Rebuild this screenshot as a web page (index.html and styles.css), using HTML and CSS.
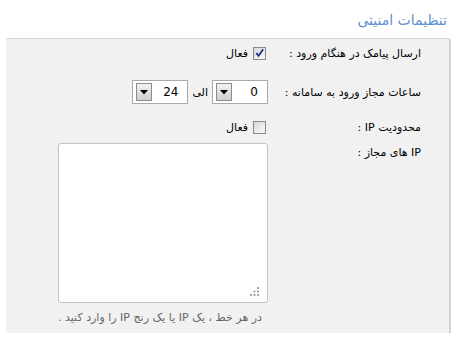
FILE: index.html
```html
<!DOCTYPE html>
<html lang="fa" dir="rtl">
<head>
    <meta charset="UTF-8">
    <title>تنظیمات امنیتی</title>
    <link rel="stylesheet" href="styles.css">
</head>
<body>
    <h1 class="title">تنظیمات امنیتی</h1>

    <div class="panel">
        <div class="row row-sms">
            <div class="label">ارسال پیامک در هنگام ورود :</div>
            <div class="field">
                <span class="check">
                    <svg width="12" height="12" viewBox="0 0 12 12"><path d="M2.5 6 L5 9 L10 2" fill="none" stroke="#1f2f8a" stroke-width="2"/></svg>
                </span>
                <span class="check-text">فعال</span>
            </div>
        </div>

        <div class="row row-hours">
            <div class="label">ساعات مجاز ورود به سامانه :</div>
            <div class="field">
                <div class="combo">
                    <span class="combo-value">0</span>
                    <span class="combo-btn"><svg width="8" height="5" viewBox="0 0 8 5"><path d="M0 0 H8 L4 4.5 Z" fill="#000"/></svg></span>
                </div>
                <span class="between">الی</span>
                <div class="combo">
                    <span class="combo-value">24</span>
                    <span class="combo-btn"><svg width="8" height="5" viewBox="0 0 8 5"><path d="M0 0 H8 L4 4.5 Z" fill="#000"/></svg></span>
                </div>
            </div>
        </div>

        <div class="row row-limit">
            <div class="label">محدودیت IP :</div>
            <div class="field">
                <span class="check"></span>
                <span class="check-text">فعال</span>
            </div>
        </div>

        <div class="row row-ips">
            <div class="label">IP های مجاز :</div>
            <div class="field field-col">
                <div class="area-wrap">
                    <textarea class="area"></textarea>
                    <svg class="grip" width="10" height="10" viewBox="0 0 10 10">
                        <rect x="7" y="0" width="2" height="2" fill="#a8a8a8"/>
                        <rect x="3.5" y="3.5" width="2" height="2" fill="#a8a8a8"/>
                        <rect x="7" y="3.5" width="2" height="2" fill="#a8a8a8"/>
                        <rect x="0" y="7" width="2" height="2" fill="#a8a8a8"/>
                        <rect x="3.5" y="7" width="2" height="2" fill="#a8a8a8"/>
                        <rect x="7" y="7" width="2" height="2" fill="#a8a8a8"/>
                    </svg>
                </div>
                <div class="hint">در هر خط ، یک IP یا یک رنج IP را وارد کنید .</div>
            </div>
        </div>
    </div>
</body>
</html>
```

FILE: styles.css
```css
body {
    margin: 0;
    padding: 0 8px 0 6px;
    font-family: "DejaVu Sans", Tahoma, sans-serif;
    font-size: 11px;
    color: #000;
    background: #fff;
}
.title {
    margin: 0;
    padding: 12px 4px 0 0;
    height: 26px;
    font-size: 14px;
    font-weight: normal;
    color: #5f8fd2;
}
.panel {
    background: #f1f1f1;
    border-top: 1px solid #d6d6d6;
    border-right: 2px solid #d3d3d3;
    border-top-right-radius: 3px;
    padding: 6px 0 10px;
    height: 278px;
}
.row {
    display: flex;
    align-items: center;
}
.label {
    width: 153px;
    padding-right: 28px;
    flex-shrink: 0;
    white-space: nowrap;
}
.field {
    display: flex;
    align-items: center;
}
.row-sms {
    height: 16px;
}
.row-hours {
    height: 24px;
    margin-top: 19px;
}
.row-limit {
    height: 16px;
    margin-top: 15px;
}
.row-ips {
    align-items: flex-start;
    margin-top: 8px;
}
.row-ips .label {
    padding-top: 3px;
}
.check {
    width: 11px;
    height: 11px;
    margin-right: 2px;
    border: 1px solid #8a8a8a;
    background: linear-gradient(135deg, #d8d8d8, #f8f8f8);
    display: flex;
    align-items: center;
    justify-content: center;
}
.check-text {
    margin-right: 5px;
}
.combo {
    width: 48px;
    height: 22px;
    border: 1px solid #a9a9a9;
    background: #fff;
    display: flex;
    align-items: center;
    justify-content: space-between;
    padding: 0 3px 0 3px;
    box-sizing: content-box;
}
.combo-value {
    font-family: "DejaVu Sans", Tahoma, sans-serif;
    font-size: 12px;
    padding-right: 6px;
}
.combo-btn {
    width: 14px;
    height: 16px;
    border: 1px solid #8c8c8c;
    background: linear-gradient(#f2f2f2, #cfcfcf);
    display: flex;
    align-items: center;
    justify-content: center;
}
.between {
    margin: 0 4px 0 4px;
}
.field-col {
    flex-direction: column;
    align-items: flex-end;
}
.area-wrap {
    position: relative;
    width: 210px;
    height: 160px;
}
.area {
    width: 210px;
    height: 160px;
    box-sizing: border-box;
    border: 1px solid #c2c2c2;
    border-radius: 3px;
    background: #fff;
    resize: none;
    margin: 0;
    display: block;
}
.grip {
    position: absolute;
    right: 8px;
    bottom: 6px;
}
.hint {
    margin-top: 8px;
    color: #666;
    font-size: 11px;
}
```
